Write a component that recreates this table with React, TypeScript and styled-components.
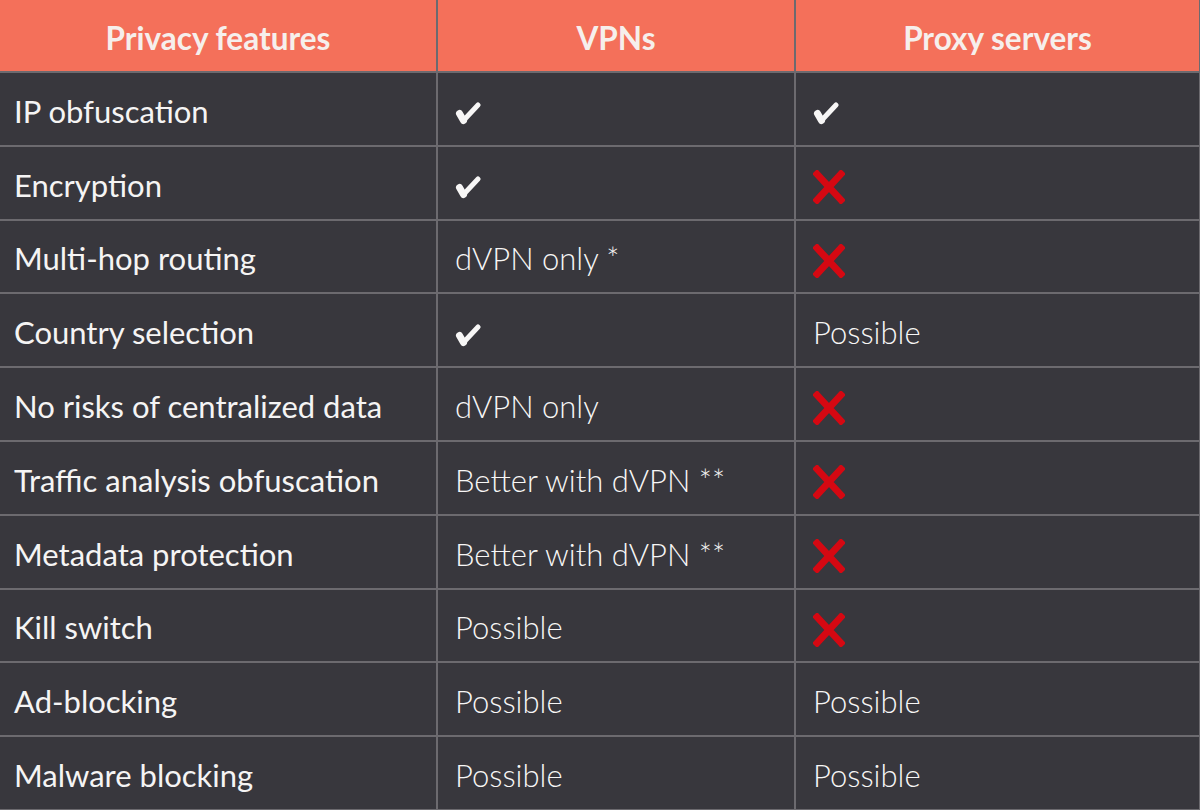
import React from 'react';
import styled, { createGlobalStyle } from 'styled-components';

type Mark = 'yes' | 'no';
type Cell = Mark | string;

interface FeatureRow {
  feature: string;
  vpn: Cell;
  proxy: Cell;
}

const rows: FeatureRow[] = [
  { feature: 'IP obfuscation', vpn: 'yes', proxy: 'yes' },
  { feature: 'Encryption', vpn: 'yes', proxy: 'no' },
  { feature: 'Multi-hop routing', vpn: 'dVPN only *', proxy: 'no' },
  { feature: 'Country selection', vpn: 'yes', proxy: 'Possible' },
  { feature: 'No risks of centralized data', vpn: 'dVPN only', proxy: 'no' },
  { feature: 'Traffic analysis obfuscation', vpn: 'Better with dVPN **', proxy: 'no' },
  { feature: 'Metadata protection', vpn: 'Better with dVPN **', proxy: 'no' },
  { feature: 'Kill switch', vpn: 'Possible', proxy: 'no' },
  { feature: 'Ad-blocking', vpn: 'Possible', proxy: 'Possible' },
  { feature: 'Malware blocking', vpn: 'Possible', proxy: 'Possible' },
];

const GlobalStyle = createGlobalStyle`
  html, body {
    margin: 0;
    padding: 0;
    background: #38373d;
  }
  body {
    font-family: Lato, "Open Sans", sans-serif;
  }
`;

const StyledTable = styled.table`
  border-collapse: collapse;
  width: 1200px;
  height: 810px;
  table-layout: fixed;
  background: #38373d;
  color: #f5f4f4;
  border-right: 2px solid #6c6a6f;
`;

const StyledHeaderCell = styled.th<{ $first?: boolean }>`
  height: 72px;
  padding: 4px 0 0;
  box-sizing: border-box;
  background: #f4705a;
  color: #f6efec;
  font-size: 31.5px;
  font-weight: 700;
  text-align: center;
  border: 2px solid #6c6a6f;
  border-top: none;
  border-left: ${(p) => (p.$first ? 'none' : '2px solid #6c6a6f')};
`;

const StyledRow = styled.tr`
  height: 73.8px;
`;

const StyledCell = styled.td<{ $light?: boolean }>`
  padding: 4px 0 0 ${(p) => (p.$light ? 17 : 14)}px;
  font-size: 31px;
  font-weight: ${(p) => (p.$light ? 300 : 400)};
  color: ${(p) => (p.$light ? '#f7f6f6' : '#f5f4f4')};
  text-align: left;
  vertical-align: middle;
  white-space: nowrap;
  border: 2px solid #6c6a6f;
  &:first-child {
    border-left: none;
  }
`;

const MarkBox = styled.span`
  display: inline-flex;
  align-items: center;
  vertical-align: middle;
  margin-top: -4px;
`;

const CheckMark = () => (
  <MarkBox>
    <svg width="26" height="24" viewBox="0 0 26 24">
      <path d="M4.5 12.5 L8.5 19.5" stroke="#f7f6f6" strokeWidth="7" strokeLinecap="round" />
      <path d="M8.5 19.5 L23 4" stroke="#f7f6f6" strokeWidth="5" strokeLinecap="round" />
    </svg>
  </MarkBox>
);

const CrossMark = () => (
  <MarkBox>
    <svg width="32" height="34" viewBox="0 0 32 34">
      <path d="M4 4 L28 30 M28 4 L4 30" stroke="#d50812" strokeWidth="7" strokeLinecap="square" />
    </svg>
  </MarkBox>
);

const renderCell = (value: Cell) => {
  if (value === 'yes') return <CheckMark />;
  if (value === 'no') return <CrossMark />;
  return value;
};

export default function App() {
  return (
    <>
      <GlobalStyle />
      <StyledTable>
        <colgroup>
          <col style={{ width: 437 }} />
          <col style={{ width: 358 }} />
          <col style={{ width: 405 }} />
        </colgroup>
        <thead>
          <tr>
            <StyledHeaderCell $first>Privacy features</StyledHeaderCell>
            <StyledHeaderCell>VPNs</StyledHeaderCell>
            <StyledHeaderCell>Proxy servers</StyledHeaderCell>
          </tr>
        </thead>
        <tbody>
          {rows.map((row) => (
            <StyledRow key={row.feature}>
              <StyledCell>{row.feature}</StyledCell>
              <StyledCell $light>{renderCell(row.vpn)}</StyledCell>
              <StyledCell $light>{renderCell(row.proxy)}</StyledCell>
            </StyledRow>
          ))}
        </tbody>
      </StyledTable>
    </>
  );
}
